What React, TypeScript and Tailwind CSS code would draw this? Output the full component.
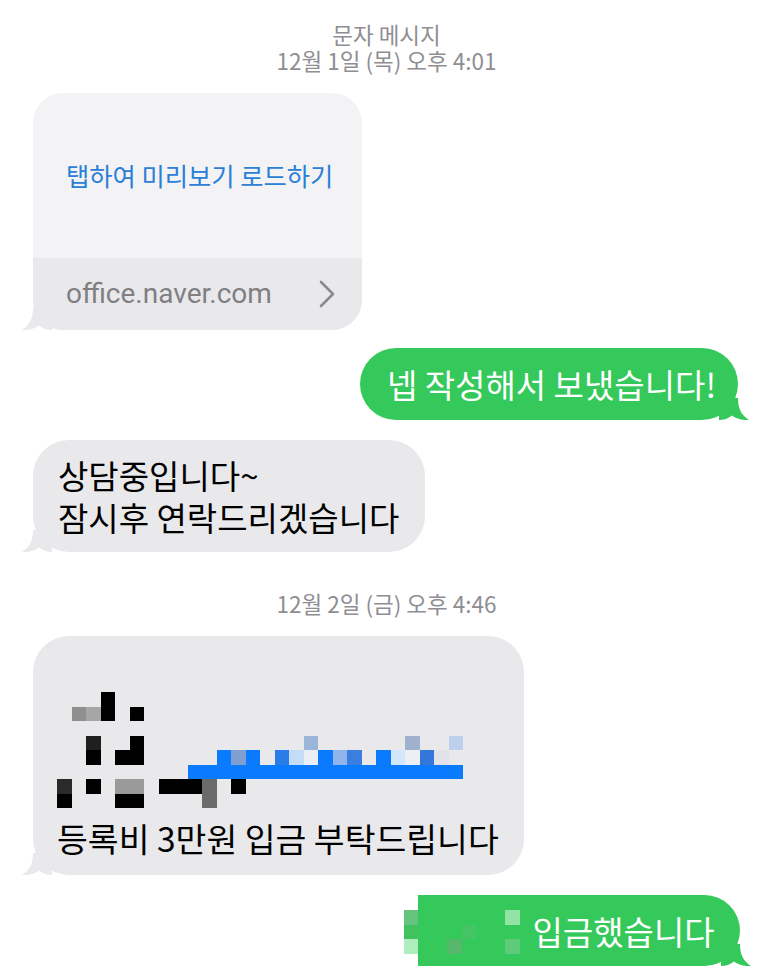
import React from 'react'

type Cell = [number, number, string]

const BLUE = '#0a7bff'

// mosaic over the sender name / link in the third message
const mosaic: Cell[] = [
  [3, 0, '#000'],
  [1, 1, '#8f8f8f'], [2, 1, '#a6a6a6'], [3, 1, '#000'], [5, 1, '#000'],
  [2, 3, '#1f1f1f'], [5, 3, '#000'], [17, 3, '#9ab4da'], [24, 3, '#a0b1d0'], [27, 3, '#bcd0ec'],
  [2, 4, '#000'], [4, 4, '#000'], [5, 4, '#000'],
  [11, 4, BLUE], [12, 4, '#7e9fcf'], [13, 4, BLUE], [15, 4, '#2a7ce9'], [16, 4, '#c5dcf8'],
  [17, 4, '#eaeef5'], [18, 4, BLUE], [19, 4, '#8fb5ec'], [20, 4, '#3a7fdf'], [22, 4, BLUE],
  [23, 4, '#d4e6fb'], [24, 4, '#eceff4'], [25, 4, '#3377dd'], [26, 4, '#e1e3e8'],
  [0, 6, '#2a2a2a'], [2, 6, '#000'], [4, 6, '#9a9a9a'], [5, 6, '#9a9a9a'], [7, 6, '#000'],
  [8, 6, '#000'], [9, 6, '#000'], [10, 6, '#6b6b6b'], [12, 6, '#000'],
  [0, 7, '#000'], [4, 7, '#000'], [5, 7, '#000'], [10, 7, '#6b6b6b'],
]

const greenMosaic: Cell[] = [
  [6, 0, '#93e2a6'], [3, 1, '#45c463'], [2, 2, '#55b86d'], [6, 2, '#5dcb79'],
]

function Tail({ color, side }: { color: string; side: 'left' | 'right' }) {
  return (
    <svg
      viewBox="0 0 30 22"
      className={
        side === 'left'
          ? 'absolute left-[-11px] bottom-0 w-[30px] h-[22px]'
          : 'absolute right-[-11px] bottom-0 w-[30px] h-[22px] -scale-x-100'
      }
    >
      <path d="M11 0 C11 10 8 17 0 22 C7 22.5 13 20.5 17 17.5 C21 20.5 25 22 30 22 L30 0 Z" fill={color} />
    </svg>
  )
}

function Stamp({ children }: { children: React.ReactNode }) {
  return <div className="text-center text-[22.5px] leading-[26px] text-[#8e8e93]">{children}</div>
}

export default function App() {
  return (
    <div className="w-[773px] h-[976px] overflow-hidden bg-white pt-[21px] font-['Noto_Sans_CJK_KR',sans-serif]">
      <Stamp>문자 메시지</Stamp>
      <Stamp>12월 1일 (목) 오후 4:01</Stamp>

      {/* link preview */}
      <div className="relative ml-[33px] mt-[20px] w-[329px]">
        <div className="relative z-10 overflow-hidden rounded-[30px]">
          <div className="flex h-[165px] items-center whitespace-nowrap bg-[#f3f3f5] px-[33px] text-[25.3px] text-[#2a80d5]">
            탭하여 미리보기 로드하기
          </div>
          <div className="flex h-[72px] items-center justify-between bg-[#e9e9eb] pl-[33px] pr-[26px]">
            <span className="font-['Roboto',sans-serif] text-[28px] text-[#7f7f84]">office.naver.com</span>
            <svg viewBox="0 0 18 28" className="h-[28px] w-[18px]">
              <polyline points="3,2 15,14 3,26" fill="none" stroke="#8a8a8e" strokeWidth="2.6" strokeLinecap="round" strokeLinejoin="round" />
            </svg>
          </div>
        </div>
        <Tail color="#e9e9eb" side="left" />
      </div>

      {/* sent */}
      <div className="mt-[18px] flex justify-end pr-[35px]">
        <div className="relative flex h-[72px] w-[378px] items-center whitespace-nowrap rounded-[36px] bg-[#35c85a] pl-[27px] text-[33px] leading-[42px] text-white">
          <span className="relative z-10">넵 작성해서 보냈습니다!</span>
          <Tail color="#35c85a" side="right" />
        </div>
      </div>

      {/* received */}
      <div className="relative ml-[33px] mt-[20px] w-[392px] whitespace-nowrap rounded-[36px] bg-[#e9e9eb] py-[14px] pl-[25px] text-[33px] leading-[42px] text-black">
        <div className="relative z-10">
          상담중입니다~
          <br />
          잠시후 연락드리겠습니다
        </div>
        <Tail color="#e9e9eb" side="left" />
      </div>

      <div className="mt-[38px]">
        <Stamp>12월 2일 (금) 오후 4:46</Stamp>
      </div>

      {/* received with mosaic */}
      <div className="relative ml-[33px] mt-[20px] w-[491px] rounded-[36px] bg-[#e9e9eb] pb-[16px] pl-[24px] pt-[56px]">
        <div className="relative z-10 grid grid-cols-[repeat(28,14.5px)] grid-rows-[repeat(8,14.5px)]">
          {mosaic.map(([c, r, color], i) => (
            <span key={i} style={{ gridColumnStart: c + 1, gridRowStart: r + 1, backgroundColor: color }} />
          ))}
          <span className="col-start-10 col-end-29 row-start-6 bg-[#0a7bff]" />
        </div>
        <div className="relative z-10 mt-[9px] whitespace-nowrap text-[33.5px] leading-[42px] text-black">등록비 3만원 입금 부탁드립니다</div>
        <Tail color="#e9e9eb" side="left" />
      </div>

      {/* sent with mosaic */}
      <div className="mt-[20px] flex justify-end pr-[33px]">
        <div className="flex w-[14.5px] flex-col pt-[15px]">
          <span className="h-[14.5px] bg-[#64c47d]" />
          <span className="h-[14.5px] bg-[#40c35e]" />
          <span className="h-[14.5px] bg-[#aeeebe]" />
        </div>
        <div className="relative flex h-[71px] w-[322px] rounded-r-[36px] bg-[#35c85a] pr-[28px]">
          <div className="relative z-10 mt-[15px] grid h-[43.5px] grid-cols-[repeat(7,14.5px)] grid-rows-[repeat(3,14.5px)]">
            {greenMosaic.map(([c, r, color], i) => (
              <span key={i} style={{ gridColumnStart: c + 1, gridRowStart: r + 1, backgroundColor: color }} />
            ))}
          </div>
          <span className="relative z-10 ml-[13px] self-center whitespace-nowrap text-[33px] leading-[42px] text-white">입금했습니다</span>
          <Tail color="#35c85a" side="right" />
        </div>
      </div>
    </div>
  )
}
